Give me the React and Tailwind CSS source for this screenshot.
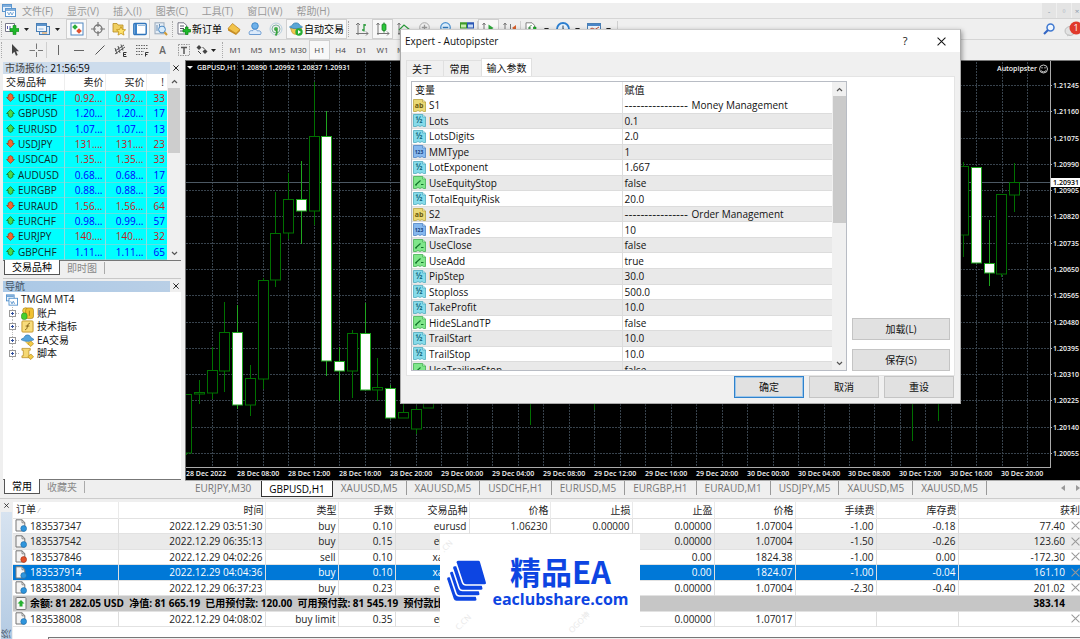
import React from "react";

/* ---------- data ---------- */

const MENUS = ["文件(F)", "显示(V)", "插入(I)", "图表(C)", "工具(T)", "窗口(W)", "帮助(H)"];

const QUOTES = [
  ["USDCHF", "0.92...", "0.92...", "33", "down"],
  ["GBPUSD", "1.20...", "1.20...", "17", "up"],
  ["EURUSD", "1.07...", "1.07...", "13", "up"],
  ["USDJPY", "131....", "131....", "23", "down"],
  ["USDCAD", "1.35...", "1.35...", "33", "down"],
  ["AUDUSD", "0.68...", "0.68...", "17", "up"],
  ["EURGBP", "0.88...", "0.88...", "36", "up"],
  ["EURAUD", "1.56...", "1.56...", "64", "down"],
  ["EURCHF", "0.98...", "0.99...", "57", "up"],
  ["EURJPY", "140....", "140....", "32", "down"],
  ["GBPCHF", "1.11...", "1.11...", "65", "up"],
];

const INPUTS = [
  ["ab", "S1", "Money Management"],
  ["half", "Lots", "0.1"],
  ["half", "LotsDigits", "2.0"],
  ["int", "MMType", "1"],
  ["half", "LotExponent", "1.667"],
  ["bool", "UseEquityStop", "false"],
  ["half", "TotalEquityRisk", "20.0"],
  ["ab", "S2", "Order Management"],
  ["int", "MaxTrades", "10"],
  ["bool", "UseClose", "false"],
  ["bool", "UseAdd", "true"],
  ["half", "PipStep", "30.0"],
  ["half", "Stoploss", "500.0"],
  ["half", "TakeProfit", "10.0"],
  ["bool", "HideSLandTP", "false"],
  ["half", "TrailStart", "10.0"],
  ["half", "TrailStop", "10.0"],
  ["bool", "UseTrailingStop", "false"],
];

const ORDER_HEAD = ["时间", "类型", "手数", "交易品种", "价格", "止损", "止盈", "价格", "手续费", "库存费"];

const ORDERS = [
  ["183537347", "2022.12.29 03:51:30", "buy", "0.10", "eurusd", "1.06230", "0.00000", "0.00000", "1.07004", "-1.00", "-0.18", "77.40"],
  ["183537542", "2022.12.29 06:35:13", "buy", "0.15", "eurusd", "", "", "0.00000", "1.07004", "-1.50", "-0.26", "123.60"],
  ["183537846", "2022.12.29 04:02:26", "sell", "0.10", "xauusd", "", "", "0.00", "1824.38", "-1.00", "0.00", "-172.30"],
  ["183537914", "2022.12.29 04:04:36", "buy", "0.10", "xauusd", "", "", "0.00", "1824.07", "-1.00", "-0.04", "161.10"],
  ["183538004", "2022.12.29 06:37:23", "buy", "0.23", "eurusd", "", "", "0.00000", "1.07004", "-2.30", "-0.40", "201.02"],
];
const PENDING = ["183538008", "2022.12.29 04:08:02", "buy limit", "0.35", "eurusd", "", "", "0.00000", "1.07017", "", "", ""];

const CHART_TABS = ["EURJPY,M30", "GBPUSD,H1", "XAUUSD,M5", "XAUUSD,M5", "USDCHF,H1", "EURUSD,M5", "EURGBP,H1", "EURAUD,M1", "USDJPY,M5", "XAUUSD,M5", "XAUUSD,M5"];

const TIMES = [
  "28 Dec 2022", "28 Dec 08:00", "28 Dec 12:00", "28 Dec 16:00", "28 Dec 20:00",
  "29 Dec 00:00", "29 Dec 04:00", "29 Dec 08:00", "29 Dec 12:00", "29 Dec 16:00", "29 Dec 20:00",
  "30 Dec 00:00", "30 Dec 04:00", "30 Dec 08:00", "30 Dec 12:00", "30 Dec 16:00", "30 Dec 20:00",
];

const PRICES = [
  "1.21245", "1.21160", "1.21075", "1.20990", "1.20905", "1.20820", "1.20735", "1.20650",
  "1.20565", "1.20480", "1.20395", "1.20310", "1.20225", "1.20140", "1.20055",
];

/* centre x, wick top, wick bottom, body top, body bottom, filled */
const CANDLES = [
  [186, 394, 455, 394, 453, 0],
  [199, 380, 404, 392, 394, 0],
  [212, 347, 399, 370, 393, 0],
  [224, 302, 392, 332, 371, 0],
  [237, 305, 409, 332, 405, 1],
  [250, 365, 416, 378, 405, 0],
  [263, 278, 389, 280, 379, 0],
  [275, 192, 287, 233, 280, 0],
  [288, 173, 239, 199, 233, 0],
  [301, 161, 244, 199, 211, 1],
  [314, 82, 225, 136, 211, 0],
  [326, 111, 376, 136, 361, 1],
  [339, 347, 401, 361, 371, 1],
  [352, 330, 398, 333, 371, 0],
  [365, 303, 390, 333, 390, 1],
  [377, 358, 401, 387, 390, 0],
  [390, 385, 419, 388, 418, 1],
  [403, 400, 418, 412, 418, 0],
  [416, 406, 434, 409, 429, 0],
  [428, 395, 408, 396, 408, 0],
  [530, 380, 425, 385, 395, 0],
  [594, 380, 410, 385, 395, 0],
  [912, 380, 441, 385, 395, 0],
  [938, 380, 421, 385, 395, 0],
  [963, 162, 257, 166, 235, 0],
  [976, 167, 263, 167, 263, 1],
  [989, 220, 286, 263, 273, 1],
  [1001, 194, 277, 194, 274, 0],
  [1014, 163, 212, 182, 195, 0],
];

/* ---------- small icons ---------- */

function Svg({ children, s = 14 }) {
  return (
    <svg width={s} height={s} viewBox="0 0 14 14" fill="none" className="shrink-0" aria-hidden="true">
      {children}
    </svg>
  );
}

const Caret = () => (
  <svg width="5" height="3" viewBox="0 0 5 3" className="shrink-0" aria-hidden="true"><path d="M0 0h5L2.500 3z" fill="#222" /></svg>
);

const Grip = () => <div className="mx-px h-4 w-[2px] shrink-0 border-l border-dotted border-[#aaa]" />;
const Sep = () => <div className="h-4 w-px shrink-0 bg-[#cfcfcf]" />;

const greenPlus = "M8.500 5h2.500v2.500h2.500V10H11v2.500H8.500V10H6V7.500h2.500z";

const I = {
  newChart: <Svg><path d="M.5 1.500h9v8h-9z" fill="#fff" stroke="#778" /><path d="M2.500 7V4M5 8V4" stroke="#55a" /><path d="M8 3.500h3v3h3v3h-3v3H8v-3H5v-3h3z" fill="#1fb82a" stroke="#0d8a17" strokeWidth=".6" /></Svg>,
  profiles: <Svg><rect x="3.500" y="4.500" width="10" height="8" fill="#dce8f6" stroke="#4a7fb5" /><rect x=".5" y="1.500" width="10" height="8" fill="#eef5fc" stroke="#4a7fb5" /><path d="M1 3h9" stroke="#5b93cc" strokeWidth="2" /><path d="M2.500 7h5" stroke="#8fb4da" /><path d="M6 11h5" stroke="#e09030" /></Svg>,
  market: <Svg><rect x="1" y="1" width="12" height="12" fill="#fff" stroke="#4f86c0" /><path d="M5 2.200l2.800 2.800L5 7.800 2.200 5z" fill="#2fae3b" /><path d="M9 6.200L11.800 9 9 11.800 6.200 9z" fill="#e05230" /></Svg>,
  cross: <Svg><circle cx="7" cy="7" r="4" stroke="#777" strokeWidth="1.300" /><path d="M7 0v5M7 9v5M0 7h5M9 7h5" stroke="#777" strokeWidth="1.200" /></Svg>,
  star: <Svg><path d="M1 1.500h4l1 1.500h5V10H1z" fill="#f0cf62" stroke="#b58b1e" strokeWidth=".8" /><path d="M9 4.500l1.400 3 3.200.3-2.400 2.100.8 3.200L9 11.400 6 13.100l.8-3.200L4.400 7.800l3.200-.3z" fill="#ffe36b" stroke="#c2921a" strokeWidth=".8" /></Svg>,
  navigator: <Svg><rect x=".8" y="1.500" width="12.400" height="11" rx="1" fill="#fff" stroke="#2f74bb" strokeWidth="1.400" /><rect x="1.500" y="2" width="2.500" height="10" fill="#3a82ca" /><path d="M5 3.500h8" stroke="#9bbfe0" /></Svg>,
  tester: <Svg><rect x="1" y=".8" width="9" height="11" fill="#e4edf6" stroke="#9ab" /><path d="M3 3v6M5.500 2v4M8 4v3" stroke="#6b90b5" /><circle cx="8" cy="7.500" r="3.400" fill="#d8ecfb" stroke="#4b89c4" /><path d="M10.500 10.300L13 13" stroke="#d19a33" strokeWidth="2" /></Svg>,
  newOrder: <Svg><path d="M1 .8h6l2.500 2.500V12H1z" fill="#fff" stroke="#667" strokeWidth=".9" /><path d="M3 4h4M3 6.500h4M3 9h3" stroke="#556" /><path d={greenPlus} fill="#1fb82a" stroke="#0d8a17" strokeWidth=".8" /></Svg>,
  gold: <Svg><path d="M5.500 1.500L13 7.500 9 11.500 1 6.500z" fill="#f2c34a" stroke="#b47a14" strokeWidth=".7" /><path d="M1 6.500L9 11.500V13L1 8.500zM9 11.500l4-4V9L9 13z" fill="#c68a1c" /></Svg>,
  cloud: <Svg><circle cx="7" cy="4" r="3.300" fill="#6fb1ea" stroke="#2f7cc2" strokeWidth=".8" /><path d="M1.500 12.500c-1.500-3.500 2-4.500 2.700-3.500C5 6.800 9 7 9.500 9c2.500-.8 4.500 1 3 3.500z" fill="#dceafa" stroke="#5b91cd" strokeWidth=".9" /></Svg>,
  signal: <Svg><circle cx="7" cy="7" r="6" stroke="#b9cfdf" /><circle cx="7" cy="7" r="4" stroke="#7fb3a0" /><circle cx="7" cy="7" r="2" fill="#43b04b" /><path d="M7 7c1 2 1 5-.5 6.500" stroke="#3aa33f" strokeWidth="1.800" /></Svg>,
  auto: <Svg><path d="M1.500 6c1-1 10-1 11 0l-1.500 4.500c-2 2.500-6 2.500-8 0z" fill="#f0c64d" stroke="#b78a20" strokeWidth=".6" /><path d="M.5 5C2 3.500 3.500 4 4 2c1-1.500 5-1.500 6 0 .5 2 2 1.500 3.500 3-3 2.200-10 2.200-13 0z" fill="#5aa7d6" stroke="#2c77ab" strokeWidth=".7" /><circle cx="10" cy="10" r="3.700" fill="#27ad33" /><path d="M9 8l3 2-3 2z" fill="#fff" /></Svg>,
  bars: <Svg><path d="M3 1v12M1 3l2-2 2 2M1 11.500h12M11 9.500l2 2-2 2" stroke="#777" /><path d="M9 2v7.500M9 8H7M9 3h2" stroke="#2a9a3a" strokeWidth="1.300" /></Svg>,
  candle: <Svg><path d="M2 1v12M.5 3L2 1l1.500 2M1 11.500h12M11 9.500l2 2-2 2" stroke="#777" /><path d="M8 .5v10" stroke="#0d7a1a" /><rect x="6" y="2" width="4" height="6.500" rx="1" fill="#2cc63b" stroke="#0d7a1a" strokeWidth=".7" /></Svg>,
  line: <Svg><path d="M2 1v12M.5 3L2 1l1.500 2M1 11.500h12" stroke="#777" /><path d="M2 8l5-5 6 5" stroke="#2a9a3a" strokeWidth="1.200" /></Svg>,
  zoomIn: <Svg><circle cx="6.500" cy="5.500" r="4.800" fill="#eee" stroke="#aaa" /><path d="M3.800 5.500h5.400M6.500 2.800v5.400" stroke="#999" strokeWidth="1.300" /><path d="M10 9l3 4" stroke="#aaa" strokeWidth="2" /></Svg>,
  zoomOut: <Svg><circle cx="6.500" cy="5.500" r="4.800" fill="#d9ecfb" stroke="#4a90cf" strokeWidth="1.200" /><path d="M3.800 5.500h5.400" stroke="#2f77ba" strokeWidth="1.400" /><path d="M10 9l3 4" stroke="#d7a23c" strokeWidth="2" /></Svg>,
  tile: <Svg><rect x=".5" y="1" width="6" height="5" fill="#c8efb0" stroke="#3f9a2a" /><rect x="7.500" y="1" width="6" height="5" fill="#c4daf8" stroke="#2b56b5" /><path d="M0 1.500h7" stroke="#3f9a2a" strokeWidth="2" /><path d="M7 1.500h7" stroke="#2b56b5" strokeWidth="2" /><rect x=".5" y="7.500" width="6" height="5" fill="#6d9ee6" stroke="#2b56b5" /><rect x="7.500" y="7.500" width="6" height="5" fill="#8bd05f" stroke="#348a22" /></Svg>,
  scroll: <Svg><path d="M2 1v12M.5 3L2 1l1.500 2M1 11.500h12" stroke="#777" /><path d="M6.500 2.500l5 3.500-5 3.500z" fill="#2fa83c" /></Svg>,
  shift: <Svg><path d="M2 1v12M.5 3L2 1l1.500 2M1 11.500h12M7.500 2v8" stroke="#777" /><path d="M13 3v6L9 6z" fill="#d9602b" /></Svg>,
  indicators: <Svg><path d="M1 .8h6l2.500 2.500V12H1z" fill="#fff" stroke="#777" strokeWidth=".9" /><path d="M3 9.500C5 9 3.500 3.500 6.500 3.500M3 6h3" stroke="#338a3c" /><path d={greenPlus} fill="#1fb82a" stroke="#0d8a17" strokeWidth=".6" /></Svg>,
  clock: <Svg><circle cx="7" cy="7" r="6" fill="#e8f3fd" stroke="#2c7fd0" strokeWidth="1.800" /><path d="M7 3.500V7l3 1" stroke="#345" /></Svg>,
  template: <Svg><rect x=".5" y="1.500" width="13" height="10" fill="#eef5fc" stroke="#4a7fb5" /><path d="M1 3h12" stroke="#4a86c8" strokeWidth="2" /><path d="M2 8l3-2 3 1.500L12 5" stroke="#c2543a" /></Svg>,
  pointer: <Svg><path d="M4 1v10l2.400-2.200L8 12.800l1.700-.7L8.100 8.200H11z" fill="#444" /></Svg>,
  thinCross: <Svg><path d="M7.500 .5v5.500M7.500 9v5M.5 7.500H6M9 7.500h5" stroke="#777" /></Svg>,
  vline: <Svg><path d="M7.500 2v10" stroke="#666" /></Svg>,
  hline: <Svg><path d="M2 7.500h10" stroke="#666" /></Svg>,
  diag: <Svg><path d="M2.500 11.500l9-9" stroke="#555" /></Svg>,
  channel: <Svg><path d="M1 8l9-6M1 11l10-7M1 5l2 6M4 3l2 7M7 1.500l2 6" stroke="#555" /><path d="M9.500 9.500v4M9.500 9.500h3M9.500 11.500h2.500M9.500 13.500h3" stroke="#333" /></Svg>,
  fib: <Svg><path d="M1 2.500h12M1 5.500h12M1 8.500h8M1 11.500h7" stroke="#666" strokeDasharray="1.500 1" /><path d="M10.500 13.500V9.500h3M10.500 11.500h2" stroke="#333" /></Svg>,
  textBox: <Svg><rect x="1.500" y="1.500" width="11" height="11" stroke="#999" strokeDasharray="1.500 1" /><path d="M4 4.500h6M7 4.500V11" stroke="#555" strokeWidth="1.500" /></Svg>,
  arrows: <Svg><path d="M4 2l2.500 2.500L4 7 1.500 4.500z" fill="#444" /><path d="M10 6l2.500 2.500L10 11 7.500 8.500z" fill="#444" /><path d="M3 8l3 3M7.500 4.500l2 1" stroke="#444" /></Svg>,
};

const ArrowMark = ({ dir }) => (
  <svg width="9" height="9" viewBox="0 0 9 9" className="shrink-0" aria-hidden="true">
    {dir === "up"
      ? <path d="M4.500.6L8.400 4.500H6.800V7L4.500 8.400 2.200 7V4.500H.6z" fill="#4ad84a" stroke="#17701e" strokeWidth=".8" />
      : <path d="M4.500 8.400L8.400 4.500H6.800V2L4.500.6 2.200 2v2.500H.6z" fill="#f5662e" stroke="#a03a1a" strokeWidth=".8" />}
  </svg>
);

const TYPE_COLORS = {
  ab: ["#ead975", "#b39c2e", "#6a5a10"],
  half: ["#86dbea", "#3fa3b8", "#1c6f84"],
  int: ["#86b8ee", "#3f78bd", "#173f7c"],
  bool: ["#7fe68a", "#35a845", "#12742a"],
};

function TypeIcon({ kind }) {
  const [bg, line, ink] = TYPE_COLORS[kind];
  const label = { ab: "ab", half: "½", int: "123" }[kind];
  return (
    <svg width="13" height="13" viewBox="0 0 13 13" className="shrink-0" aria-hidden="true">
      <path d="M.5.5h9L12.500 3v9.500h-2L9 11.500 7 12.500 5 11.500 3 12.500H.5z" fill={bg} stroke={line} strokeWidth=".7" />
      <path d="M9.500.5V3h3" fill="#fff" fillOpacity=".5" stroke={line} strokeWidth=".6" />
      {kind === "bool"
        ? <path d="M2.500 9l5-4.500M8 8.500h2.500M2 9h2" stroke={ink} strokeWidth="1.100" fill="none" />
        : <text x="6" y="9" textAnchor="middle" fontSize={kind === "int" ? 5 : kind === "ab" ? 7 : 8} fontWeight="700" fontFamily="Open Sans" fill={ink}>{label}</text>}
    </svg>
  );
}

const OrderIcon = ({ sell }) => (
  <svg width="12" height="13" viewBox="0 0 12 13" className="shrink-0" aria-hidden="true">
    <path d="M1 .8h6L9.800 3.500V12H1z" fill="#f4f4f4" stroke="#777" />
    <path d="M7 .8v3h2.800" fill="none" stroke="#777" strokeWidth=".8" />
    <circle cx="8.700" cy="9.500" r="2.900" fill={sell ? "#e2532c" : "#2f95dc"} stroke={sell ? "#a63012" : "#1c69a6"} strokeWidth=".6" />
  </svg>
);

const CloseX = ({ s = 6, c = "#222", w = 1.3 }) => (
  <svg width={s} height={s} viewBox="0 0 8 8" className="shrink-0" aria-hidden="true"><path d="M.5.5l7 7M7.500.5l-7 7" stroke={c} strokeWidth={w} fill="none" /></svg>
);

const Chevron = ({ down }) => (
  <svg width="7" height="5" viewBox="0 0 7 5" aria-hidden="true"><path d={down ? "M1 1l2.500 2.500L6 1" : "M1 4l2.500-2.500L6 4"} stroke="#555" strokeWidth="1.200" fill="none" /></svg>
);

const Tool = ({ label, children, on }) => (
  <button type="button" aria-label={label} className={`flex h-5 w-[21px] shrink-0 items-center justify-center ${on ? "border border-[#d0d0d0] bg-[#f8f8f8]" : ""}`}>
    {children}
  </button>
);

const DropTool = ({ label, children, tight }) => (
  <button type="button" aria-label={label} className={`flex h-5 shrink-0 items-center pl-px ${tight ? "w-[27px] gap-[2px]" : "w-[31px] gap-[5px]"}`}>
    {children}<Caret />
  </button>
);

/* ---------- header ---------- */

function Header() {
  return (
    <header className="bg-[#efefef]">
      <div className="h-[3px] bg-white" />
      <div className="flex h-4 items-center border-b border-[#d5d5d5]">
        <svg width="14" height="13" viewBox="0 0 14 13" className="ml-[2px] shrink-0" aria-hidden="true">
          <rect x=".5" y=".5" width="9" height="7" fill="#e7f1fb" stroke="#5c96cf" /><path d="M1 2h8" stroke="#5c96cf" strokeWidth="1.500" />
          <rect x="3.500" y="4.500" width="10" height="8" fill="#fff" stroke="#5c96cf" /><path d="M4 6h9" stroke="#5c96cf" strokeWidth="1.500" /><path d="M5.500 8l1.500 3 1.500-3 1.500 3 1.500-3" stroke="#5c96cf" fill="none" strokeWidth=".8" />
        </svg>
        <nav className="ml-[6px] flex gap-[14px] text-[#999]">
          {MENUS.map((m) => <button type="button" key={m} className="leading-[14px]">{m}</button>)}
        </nav>
        <div className="ml-auto flex h-full gap-px">
          {["-", "▫", "×"].map((g, i) => (
            <button type="button" key={i} aria-label={["最小化", "还原", "关闭"][i]} className={`bg-[#e4e4e4] text-center text-[8px] leading-[14px] text-[#8a9aac] ${i === 2 ? "w-2 pl-[2px]" : "w-[14px]"}`}>{g}</button>
          ))}
        </div>
      </div>

      <div className="flex h-[21px] items-center border-b border-[#d5d5d5]">
        <Grip />
        <DropTool label="新图表">{I.newChart}</DropTool>
        <DropTool label="配置文件">{I.profiles}</DropTool>
        <Tool label="市场报价" on>{I.market}</Tool>
        <Tool label="数据窗口">{I.cross}</Tool>
        <Tool label="导航" on>{I.star}</Tool>
        <Tool label="终端" on>{I.navigator}</Tool>
        <Tool label="策略测试">{I.tester}</Tool>
        <Grip />
        <button type="button" className="flex h-5 w-12 shrink-0 items-center gap-px whitespace-nowrap pl-[2px] text-black">{I.newOrder}新订单</button>
        <Tool label="MetaEditor">{I.gold}</Tool>
        <Tool label="社区">{I.cloud}</Tool>
        <Tool label="信号">{I.signal}</Tool>
        <button type="button" className="flex h-5 w-[61px] shrink-0 items-center gap-px whitespace-nowrap border border-[#d0d0d0] bg-[#f8f8f8] pl-[2px] text-black">{I.auto}自动交易</button>
        <Grip />
        <Tool label="柱状图">{I.bars}</Tool>
        <Tool label="蜡烛图" on>{I.candle}</Tool>
        <Tool label="折线图">{I.line}</Tool>
        <Tool label="放大">{I.zoomIn}</Tool>
        <Tool label="缩小">{I.zoomOut}</Tool>
        <Tool label="平铺窗口">{I.tile}</Tool>
        <Sep />
        <Tool label="自动滚动" on>{I.scroll}</Tool>
        <Tool label="图表平移">{I.shift}</Tool>
        <Sep />
        <div className="flex pl-[3px]">
          <DropTool label="指标">{I.indicators}</DropTool>
          <DropTool label="周期">{I.clock}</DropTool>
          <DropTool label="模板">{I.template}</DropTool>
        </div>
        <Sep />
        <div className="ml-auto flex h-full shrink-0 items-center gap-[9px]">
          <button type="button" aria-label="搜索">
            <svg width="12" height="12" viewBox="0 0 12 12" aria-hidden="true"><circle cx="7.500" cy="4.500" r="3.500" fill="#eef6ff" stroke="#3f78d0" strokeWidth="1.500" /><path d="M5 7L1 11" stroke="#3366c4" strokeWidth="2.200" /></svg>
          </button>
          <button type="button" aria-label="消息">
            <svg width="16" height="16" viewBox="0 0 16 16" aria-hidden="true"><ellipse cx="6" cy="10" rx="5" ry="4.500" fill="#e2e2e2" stroke="#aaa" strokeWidth=".7" /><path d="M3 13v2.500l3-2" fill="#c8c8c8" /><circle cx="12" cy="7" r="6.500" fill="#e0392b" /><text x="12" y="10" textAnchor="middle" fontSize="9" fill="#fff" fontFamily="Open Sans">1</text></svg>
          </button>
        </div>
      </div>

      <div className="flex h-5 items-center">
        <Grip />
        <Tool label="光标">{I.pointer}</Tool>
        <Tool label="十字准线">{I.thinCross}</Tool>
        <Sep />
        <Tool label="垂直线">{I.vline}</Tool>
        <Tool label="水平线">{I.hline}</Tool>
        <Tool label="趋势线">{I.diag}</Tool>
        <Tool label="等距通道">{I.channel}</Tool>
        <Tool label="斐波那契">{I.fib}</Tool>
        <Tool label="文字"><span className="font-semibold text-[#666]">A</span></Tool>
        <Tool label="文字标签">{I.textBox}</Tool>
        <DropTool label="箭头" tight>{I.arrows}</DropTool>
        <Grip />
        {["M1", "M5", "M15", "M30", "H1", "H4", "D1", "W1", "MN"].map((t) => (
          <Tool key={t} label={t} on={t === "H1"}><span className="text-[8px] text-[#444]">{t}</span></Tool>
        ))}
      </div>
    </header>
  );
}

/* ---------- left panels ---------- */

function PanelTabs({ active, other }) {
  return (
    <div className="flex h-[15px] shrink-0 items-stretch border-t border-[#777] leading-[13px]">
      <button type="button" className="-mt-px ml-px border-x border-b border-[#555] bg-white px-[7px] text-black">{active}</button>
      <button type="button" className="mr-[7px] pl-[7px] text-[#888]">{other}</button>
      <div className="my-px w-px bg-[#aaa]" />
    </div>
  );
}

function MarketWatch() {
  return (
    <section className="flex h-[214px] shrink-0 flex-col">
      <div className="flex h-[13px] shrink-0 items-center">
        <h2 className="flex-1 bg-[#cddcec] pl-[2px] leading-[12px] text-[#444]">市场报价: <span className="text-black">21:56:59</span></h2>
        <button type="button" aria-label="关闭" className="flex w-[11px] justify-center"><CloseX /></button>
      </div>
      <div className="flex min-h-0 flex-1 bg-white">
        <table className="h-full flex-1 table-fixed border-collapse leading-[12px]">
          <colgroup><col className="w-[61px]" /><col className="w-[41px]" /><col className="w-[41px]" /><col /></colgroup>
          <thead>
            <tr className="h-4 border-b border-[#ddd] text-[#222]">
              <th className="pl-[3px] text-left font-normal">交易品种</th>
              <th className="border-l border-[#eee] pr-px text-right font-normal">卖价</th>
              <th className="border-l border-[#eee] pr-px text-right font-normal">买价</th>
              <th className="border-l border-[#eee] pr-[3px] text-right font-normal">!</th>
            </tr>
          </thead>
          <tbody>
            {QUOTES.map(([sym, bid, ask, spread, dir]) => (
              <tr key={sym} className={`border-b border-[#5fe0e0] bg-[#00ffff] ${dir === "up" ? "text-[#0000ff]" : "text-[#c8201e]"}`}>
                <td className="text-[#102a2a]"><div className="flex items-center gap-[3px] pl-[3px]"><ArrowMark dir={dir} />{sym}</div></td>
                <td className="border-l border-[#8fdede] pr-[2px] text-right">{bid}</td>
                <td className="border-l border-[#8fdede] pr-[2px] text-right">{ask}</td>
                <td className="border-l border-[#8fdede] pr-[2px] text-right">{spread}</td>
              </tr>
            ))}
          </tbody>
        </table>
        <div className="flex w-[14px] flex-col items-center bg-[#f0f0f0]">
          <div className="flex h-[14px] items-center"><Chevron /></div>
          <div className="h-[65px] w-3 bg-[#cdcdcd]" />
          <div className="mt-auto flex h-[14px] items-center"><Chevron down /></div>
        </div>
      </div>
      <PanelTabs active="交易品种" other="即时图" />
    </section>
  );
}

const TREE = [
  ["账户", <Svg key="a" s={13}><circle cx="5" cy="4" r="3.200" fill="#f2d04a" stroke="#a87d10" strokeWidth=".7" /><rect x="5" y="1" width="8.500" height="11.500" rx="2.500" fill="#f0c030" stroke="#a87d10" strokeWidth=".7" /><path d="M9 4v5.500" stroke="#a87d10" /><rect x=".5" y="6.500" width="6" height="7" rx="2.500" fill="#46cf2e" stroke="#268a16" strokeWidth=".6" /></Svg>],
  ["技术指标", <Svg key="b" s={13}><rect x="1" y="1" width="12" height="12" rx="1" fill="#f8dc7c" stroke="#c29426" /><path d="M9.500 3.500c-3-.5-2 7-5 7M5 6.500h4" stroke="#7a5a10" /></Svg>],
  ["EA交易", <Svg key="c" s={13}><path d="M4 8h5l1 3-2 1z" fill="#e9c75a" /><path d="M0 6C2 4 3.500 5 4 2.500c1-2 5-2 6 0C10.500 4.500 12 4 14 6c-4 2.500-10 2.500-14 0z" fill="#55a4dc" stroke="#2a74ab" strokeWidth=".7" /><path d="M10.500 7.500L13.500 10.500 10.500 13.500 7.500 10.500z" fill="#f3cb45" stroke="#b58a1c" strokeWidth=".8" /></Svg>],
  ["脚本", <Svg key="d" s={13}><path d="M1 1.500h9v2H8.500v6H10v2H1v-2h1.500v-6H1z" fill="#f5d873" stroke="#b98e24" strokeWidth=".8" /><path d="M10.500 7.500L13.500 10.500 10.500 13.500 7.500 10.500z" fill="#f3cb45" stroke="#b58a1c" strokeWidth=".8" /></Svg>],
];

function Navigator() {
  return (
    <section className="mt-[3px] flex min-h-0 flex-1 flex-col border-t border-[#c8c8c8] pt-px">
      <div className="flex h-3 shrink-0 items-center">
        <h2 className="flex-1 bg-gradient-to-r from-[#aac8e6] to-[#b9cfe6] pl-[2px] leading-[11px] text-[#456]">导航</h2>
        <button type="button" aria-label="关闭" className="flex w-[11px] justify-center"><CloseX /></button>
      </div>
      <div className="min-h-0 flex-1 bg-white">
        <ul className="flex h-[68px] flex-col text-[#111]">
          <li className="flex flex-1 items-center gap-[3px] pl-[3px]">
            <svg width="12" height="12" viewBox="0 0 14 13" aria-hidden="true"><rect x=".5" y=".5" width="9" height="7" fill="#e7f1fb" stroke="#4c8cc9" /><path d="M1 2h8M4 6h9" stroke="#4c8cc9" strokeWidth="1.500" /><rect x="3.500" y="4.500" width="10" height="8" fill="#fff" stroke="#4c8cc9" /><path d="M5.500 8l1.500 3 1.500-3 1.500 3" stroke="#4c8cc9" fill="none" /></svg>
            TMGM MT4
          </li>
          {TREE.map(([name, icon]) => (
            <li key={name} className="flex flex-1 items-center pl-[6px] leading-[13px]">
              <svg width="11" height="13" viewBox="0 0 11 13" aria-hidden="true"><path d="M3.500 0v13M7 6.500h4" stroke="#bbb" strokeDasharray="1 1" /><rect x=".5" y="3.500" width="6" height="6" fill="#fff" stroke="#999" /><path d="M2 6.500h3M3.500 5v3" stroke="#2f4f9f" /></svg>
              <span className="ml-px mr-[3px]">{icon}</span>{name}
            </li>
          ))}
        </ul>
      </div>
      <PanelTabs active="常用" other="收藏夹" />
    </section>
  );
}

/* ---------- chart ---------- */

function Chart() {
  const vertical = Array.from({ length: 33 }, (_, i) => Math.round(212 + i * 25.48) + 0.5);
  const rows = PRICES.map((p, i) => [p, Math.round(85 + i * 26.28) + 0.5]);
  return (
    <div className="flex min-h-0 flex-1 border-l border-t border-[#777] bg-black">
      <svg viewBox="186 61 864 419" preserveAspectRatio="xMinYMin slice" className="h-full min-w-0 flex-1" fontFamily="Open Sans" fontSize="7" fontWeight="600" fill="#f4f4f4" role="img" aria-label="GBPUSD,H1">
        <g stroke="#38434d" strokeWidth="1" strokeDasharray="2 1">
          {vertical.map((x) => <line key={x} x1={x} x2={x} y1="62" y2="467" />)}
          {rows.map(([p, y]) => <line key={p} x1="186" x2="1050" y1={y} y2={y} />)}
        </g>
        <line x1="186" x2="1050" y1="182.500" y2="182.500" stroke="#4c5863" />
        {CANDLES.map(([x, wt, wb, bt, bb, full]) => (
          <g key={x} stroke={full ? "#1ea51e" : "#007000"}>
            <line x1={x + 0.5} x2={x + 0.5} y1={wt} y2={wb} />
            <rect x={x - 4.5} y={bt + 0.5} width="10" height={Math.max(bb - bt - 0.5, 1)} fill={full ? "#fff" : "#000"} />
          </g>
        ))}
        <path d="M186 467.500h864" stroke="#aaa" />
        {TIMES.map((t, i) => (
          <text key={t} x={Math.round(186 + i * 50.96)} y="476">{t}</text>
        ))}
        <path d="M187 66h6l-3 3z" />
        <text x="197" y="70">GBPUSD,H1</text>
        <text x="241" y="70">1.20890 1.20992 1.20837 1.20931</text>
        <text x="997" y="71">Autopipster</text>
        <g fill="none" stroke="#ddd" strokeWidth=".9"><circle cx="1043.500" cy="69" r="4" /><path d="M1041 70.500c1 1.800 4 1.800 5 0M1042 67v1.500M1045 67v1.500" /></g>
      </svg>
      <svg viewBox="1050 61 30 419" preserveAspectRatio="xMinYMin slice" className="h-full w-[30px] shrink-0" fontFamily="Open Sans" fontSize="7" fontWeight="600" fill="#f4f4f4" aria-hidden="true">
        <path d="M1050.500 61v407" stroke="#aaa" />
        {rows.map(([p, y]) => <g key={p}><path d={`M1050 ${y}h2`} stroke="#aaa" /><text x="1053" y={y + 2.5}>{p}</text></g>)}
        <rect x="1051" y="178" width="29" height="9" fill="#fff" />
        <text x="1053" y="185" fill="#000">1.20931</text>
      </svg>
    </div>
  );
}

function ChartTabs() {
  return (
    <nav className="flex h-[18px] shrink-0 border-t border-[#aaa] bg-[#efefef] leading-[14px] text-[#777]">
      {CHART_TABS.map((t, i) => (
        <button
          type="button"
          key={i}
          className={
            i === 1
              ? "mb-px border-x border-b border-[#333] bg-white px-[7px] text-black"
              : `mb-[3px] ${i === 0 ? "px-[10px]" : "border-r border-[#999] px-2"}`
          }
        >
          {t}
        </button>
      ))}
      <div className="ml-auto flex items-center gap-[11px] overflow-hidden pb-1">
        <svg width="4" height="6" viewBox="0 0 4 6" aria-hidden="true"><path d="M4 0v6L0 3z" fill="#999" /></svg>
        <svg width="4" height="6" viewBox="0 0 4 6" aria-hidden="true"><path d="M0 0v6l4-3z" fill="#999" /></svg>
      </div>
    </nav>
  );
}

/* ---------- dialog ---------- */

function Dialog() {
  return (
    <div role="dialog" aria-label="Expert - Autopipster" className="absolute left-[400px] top-[29px] flex w-[561px] flex-col border border-[#aaa] border-t-[#ccc] bg-[#f0f0f0] text-[#111] shadow-[1px_2px_5px_rgba(0,0,0,0.4)]">
      <div className="flex h-[22px] items-center bg-white pl-1 pr-[14px]">
        <h1 className="flex-1">Expert - Autopipster</h1>
        <button type="button" aria-label="帮助" className="mr-[29px] w-[6px] text-[11px]">?</button>
        <button type="button" aria-label="关闭"><CloseX s={9} c="#111" w={0.9} /></button>
      </div>
      <div className="px-[5px] pt-[6px]">
        <div role="tablist" className="flex h-[18px] items-end">
          <button type="button" role="tab" className="h-4 w-[38px] border border-b-0 border-[#e0e0e0] pr-[6px] leading-[16px]">关于</button>
          <button type="button" role="tab" className="h-4 w-[37px] border-t border-[#e0e0e0] pr-[6px] leading-[16px]">常用</button>
          <button type="button" role="tab" aria-selected="true" className="h-[18px] w-[51px] border border-b-0 border-[#e0e0e0] bg-white leading-[16px]">输入参数</button>
        </div>
        <div className="flex h-[300px] justify-between border border-[#e4e4e4] bg-white py-1 pl-1 pr-1">
          <div className="flex w-[436px] overflow-hidden border border-[#b8bcc4]">
            <div className="min-w-0 flex-1 overflow-hidden">
              <table className="h-[296px] w-full table-fixed border-collapse leading-[12px]">
                <colgroup><col className="w-[210px]" /><col /></colgroup>
                <thead>
                  <tr className="h-4"><th className="pl-[3px] text-left font-normal">变量</th><th className="border-l border-[#e8e8e8] pl-[2px] text-left font-normal">赋值</th></tr>
                </thead>
                <tbody>
                  {INPUTS.map(([kind, name, value], i) => (
                    <tr key={name} className={i % 2 ? "border-y border-[#dcdcdc] bg-[#e9e9e9]" : ""}>
                      <td><div className="flex items-center gap-[3px] pl-px"><TypeIcon kind={kind} />{name}</div></td>
                      <td className="border-l border-[#dcdcdc] pl-[2px]">
                        {kind === "ab" && <span className="font-['DejaVu_Sans',sans-serif] text-[11px] leading-[10px]">---------------- </span>}
                        {value}
                      </td>
                    </tr>
                  ))}
                </tbody>
              </table>
            </div>
            <div className="flex w-[14px] shrink-0 flex-col items-center bg-[#f0f0f0]">
              <div className="flex h-[14px] items-center"><Chevron /></div>
              <div className="h-[127px] w-[13px] bg-[#cacaca]" />
              <div className="mt-auto flex h-[14px] items-center"><Chevron down /></div>
            </div>
          </div>
          <div className="flex flex-col justify-end gap-[9px]">
            <button type="button" className="h-[22px] w-[98px] border border-[#c4c4c4] bg-[#e1e1e1]">加载(L)</button>
            <button type="button" className="h-[22px] w-[98px] border border-[#c4c4c4] bg-[#e1e1e1]">保存(S)</button>
          </div>
        </div>
      </div>
      <div className="flex justify-end gap-[5px] pb-[5px] pr-[6px]">
        <button type="button" className="h-[22px] w-[70px] border border-[#2f82cc] bg-[#e1e1e1] outline outline-1 -outline-offset-2 outline-[#9cc6ea]">确定</button>
        <button type="button" className="h-[22px] w-[70px] border border-[#c4c4c4] bg-[#e1e1e1]">取消</button>
        <button type="button" className="h-[22px] w-[70px] border border-[#c4c4c4] bg-[#e1e1e1]">重设</button>
      </div>
    </div>
  );
}

/* ---------- terminal ---------- */

function OrderRow({ row, tone = "", line = "border-[#e2e2e2]" }) {
  return (
    <tr className={`border-b ${line} ${tone}`}>
      <td><div className="flex items-center gap-[3px] pl-[2px]"><OrderIcon sell={row[2] === "sell"} />{row[0]}</div></td>
      {row.slice(1, 11).map((v, i) => <td key={i} className="border-l border-[#dedede] pr-[2px] text-right">{v}</td>)}
      <td className="border-l border-[#dedede]">
        <div className="flex items-center justify-end gap-[6px]">{row[11]}<button type="button" aria-label="平仓"><CloseX s={9} c="#999" w={0.9} /></button></div>
      </td>
    </tr>
  );
}

const SHEET = "M13 1h20.500c1 0 1.900.5 2.300 2l5.800 20c.5 2-.2 3-2 3H21c-1.700 0-3-1-3.500-2.500L11 4c-.5-2 .5-3 2-3z";

function Brand() {
  return (
    <div className="absolute left-[440px] top-[534px] flex h-[101px] w-[200px] items-center overflow-hidden bg-white pl-[5px]">
      <span className="absolute left-0 top-2 -rotate-45 text-[8px] leading-none text-[#e8e8e8]">.CN</span>
      <span className="absolute left-[14px] top-[84px] -rotate-45 text-[8px] leading-none text-[#e8e8e8]">C.CN</span>
      <span className="absolute left-[126px] top-[84px] -rotate-45 text-[8px] leading-none text-[#e8e8e8]">OGO神</span>
      <svg width="44" height="44" viewBox="0 0 44 44" className="relative -mt-2 shrink-0" aria-hidden="true">
        <g fill="#0d45e2" stroke="#fff" strokeWidth="1.600">
          <path d={SHEET} transform="translate(-9.500 16.500)" />
          <path d={SHEET} transform="translate(-6.500 11)" />
          <path d={SHEET} transform="translate(-3.500 5.500)" />
          <path d={SHEET} />
        </g>
      </svg>
      <div className="relative -mt-2 flex flex-1 flex-col items-center pr-2 font-bold text-[#0d45e2]">
        <span className="font-['Noto_Sans_CJK_SC',sans-serif] text-[31px] leading-[36px]">精品EA</span>
        <span className="text-[16px] leading-[20px]">eaclubshare.com</span>
      </div>
    </div>
  );
}

function Terminal() {
  return (
    <section className="flex h-[141px] shrink-0 border-t border-[#ccc] bg-[#efefef]">
      <div className="flex w-[13px] shrink-0 flex-col items-center overflow-hidden">
        <button type="button" aria-label="关闭" className="flex h-[13px] items-center"><CloseX s={5} /></button>
        <div className="flex w-[11px] flex-1 items-end overflow-hidden bg-gradient-to-b from-[#d7e3f0] to-[#b4cbe3]">
          <span className="-rotate-90 leading-[11px] text-[#567]">终</span>
        </div>
      </div>
      <div className="min-w-0 flex-1 overflow-hidden bg-white">
        <div className="h-[3px] bg-[#efefef]" />
        <table className="h-[125px] w-full table-fixed border-collapse leading-[12px] text-[#222]">
          <colgroup>
            <col className="w-[105px]" /><col className="w-[147px]" /><col className="w-[73px]" /><col className="w-[57px]" /><col className="w-[74px]" />
            <col className="w-[81px]" /><col className="w-[82px]" /><col className="w-[82px]" /><col className="w-[81px]" /><col className="w-[81px]" /><col className="w-[82px]" /><col />
          </colgroup>
          <thead>
            <tr className="h-4 border-b border-[#e2e2e2]">
              <th className="pl-[3px] text-left font-normal">订单 <span className="text-[7px] text-[#aaa]">⁄</span></th>
              {ORDER_HEAD.map((h, i) => <th key={i} className="border-l border-[#eaeaea] pr-px text-right font-normal">{h}</th>)}
              <th className="border-l border-[#eaeaea] text-right font-normal">获利</th>
            </tr>
          </thead>
          <tbody>
            {ORDERS.map((row, i) => (
              <OrderRow key={row[0]} row={row} tone={i === 3 ? "bg-[#0078d7] text-white" : i === 1 ? "bg-[#eaeaea]" : ""} />
            ))}
            <tr className="border-b border-[#e2e2e2] bg-[#c6c6c6] font-bold text-black">
              <td colSpan={11}>
                <div className="flex items-center gap-[3px] whitespace-nowrap pl-[2px]">
                  <svg width="12" height="13" viewBox="0 0 12 13" className="shrink-0" aria-hidden="true"><rect x="1" y=".5" width="10" height="12" rx="1" fill="#f6f6f6" stroke="#777" /><path d="M6 3L9.500 6.500h-2v3h-3v-3h-2z" fill="#26b02f" /></svg>
                  <span className="whitespace-pre">余额: 81 282.05 USD  净值: 81 665.19  已用预付款: 120.00  可用预付款: 81 545.19  预付款比</span>
                </div>
              </td>
              <td className="pr-[15px] text-right">383.14</td>
            </tr>
            <OrderRow row={PENDING} />
          </tbody>
        </table>
        <div className="mt-[10px] ml-[35px] h-2 border-l border-t border-[#777] bg-[#efefef]" />
      </div>
    </section>
  );
}

export default function App() {
  return (
    <div className="relative flex h-screen w-full flex-col overflow-hidden bg-[#efefef] font-['Open_Sans','Noto_Sans_CJK_SC',sans-serif] text-[10px]">
      <Header />
      <main className="flex min-h-0 flex-1">
        <aside className="flex w-[185px] shrink-0 flex-col pb-1 pl-[3px] pr-1 pt-px">
          <MarketWatch />
          <Navigator />
        </aside>
        <div className="flex min-w-0 flex-1 flex-col">
          <Chart />
          <ChartTabs />
        </div>
      </main>
      <Terminal />
      <Brand />
      <Dialog />
    </div>
  );
}
